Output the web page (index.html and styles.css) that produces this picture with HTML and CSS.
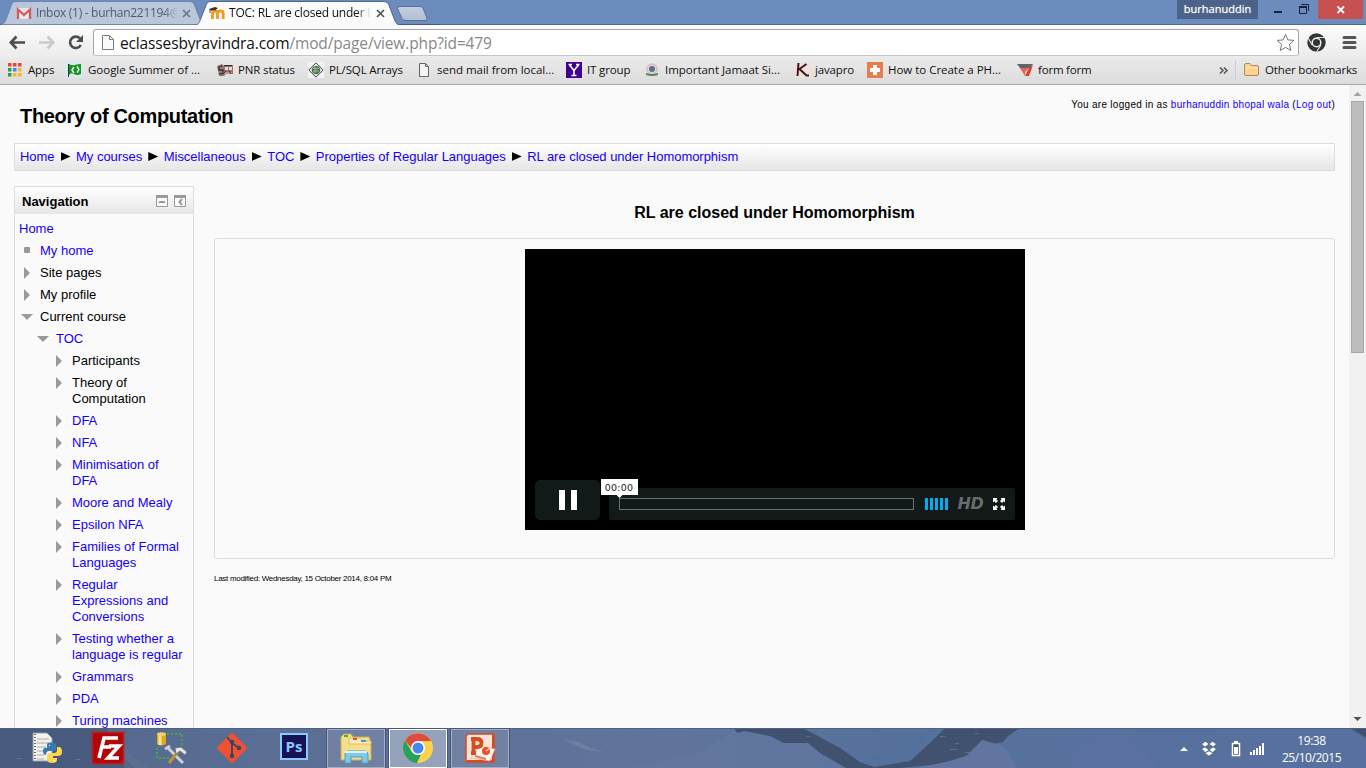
FILE: index.html
```html
<!DOCTYPE html>
<html lang="en">
<head>
<meta charset="utf-8">
<title>TOC: RL are closed under Homomorphism</title>
<link rel="stylesheet" href="styles.css">
</head>
<body>
<div class="screen">
<header class="tabstrip">
  <svg class="tab-shapes" width="440" height="25" viewBox="0 0 440 25">
    <defs><linearGradient id="newtab" x1="0" y1="0" x2="0" y2="1"><stop offset="0" stop-color="#c4cedd"/><stop offset="1" stop-color="#b1bfd5"/></linearGradient></defs>
    <path d="M0 24.500H1366" stroke="#43597f"/>
    <path d="M1 24.500C5 24 6 20 7 17L12 3.500Q13.500 1.500 16 1.500H190Q193 1.500 194 4L201 22Q202 24.500 204 24.500Z" fill="#bac6da" stroke="#7187ab"/>
    <path d="M397.500 8.500Q398 6.500 400 6.500H420Q422 6.500 423 8.500L427 18Q427.500 20.500 425 20.500H406Q403 20.500 402 18.500Z" fill="url(#newtab)" stroke="#586f98"/>
    <path d="M194 25.500C199 25 200 21 201 18L206.500 4Q207.500 1.500 210 1.500H384Q387 1.500 388.500 4L395 21Q396.500 25 401 25.500Z" fill="#fbfbfb" stroke="#536787"/>
  </svg>
  <div class="tab tab-mail">
    <svg class="fav" width="16" height="16" viewBox="0 0 16 16"><rect x="1" y="3" width="14" height="11" fill="#e5e5e7"/><path d="M2 14V4.500L8 10L14 4.500V14" fill="none" stroke="#cf5b5b" stroke-width="2.300"/></svg>
    <span class="tab-title">Inbox (1) - burhan221194@</span>
    <svg class="close" width="9" height="9" viewBox="0 0 9 9"><path d="M1 1L8 8M8 1L1 8" stroke="#667084" stroke-width="1.500"/></svg>
  </div>
  <div class="tab tab-toc">
    <svg class="fav" width="16" height="16" viewBox="0 0 16 16"><path d="M3.500 14V8M3.500 8Q4 6 6 6Q8.300 6 8.500 8V14M8.500 8Q9 6 11.500 6Q14 6 14.200 8V14" fill="none" stroke="#f49a1b" stroke-width="2.800"/><path d="M0 4L6 2L9 3L6 5.500Q4 4.500 2.500 6Z" fill="#333"/><path d="M1 4V8" stroke="#555"/></svg>
    <span class="tab-title">TOC: RL are closed under H</span>
    <svg class="close" width="9" height="9" viewBox="0 0 9 9"><path d="M1 1L8 8M8 1L1 8" stroke="#555" stroke-width="1.700"/></svg>
  </div>
  <div class="window-controls">
    <span class="user">burhanuddin</span>
    <svg width="60" height="19" viewBox="0 0 60 19"><path d="M16 12H24" stroke="#16233a" stroke-width="2"/><path d="M41.500 6.500H48.500V13.500H41.500ZM43.500 4.500H50.500V11" fill="none" stroke="#16233a"/><path d="M41 7H49" stroke="#16233a" stroke-width="2"/></svg>
    <span class="win-close"><svg width="45" height="19" viewBox="0 0 45 19"><path d="M19.500 6.500L26 13M26 6.500L19.500 13" stroke="#fff" stroke-width="1.800"/></svg></span>
  </div>
</header>
<div class="toolbar">
  <svg class="nav-icons" width="93" height="32" viewBox="0 0 93 32">
    <path d="M11 17.500H25M16.500 11.500L10.800 17.500L16.500 23.500" fill="none" stroke="#4d4d4d" stroke-width="2.600"/>
    <path d="M39 17.500H53M47.500 11.500L53.200 17.500L47.500 23.500" fill="none" stroke="#cacaca" stroke-width="2.600"/>
    <path d="M80.800 20A5.700 5.700 0 1 1 80 13.500" fill="none" stroke="#4d4d4d" stroke-width="2.600"/><path d="M83 10V17H76Z" fill="#4d4d4d"/>
  </svg>
  <div class="omnibox">
    <svg class="page-icon" width="12" height="15" viewBox="0 0 12 15"><path d="M1 .5H7.500L11.500 4.500V14.500H.5V.5ZM7.500 .5V4.500H11.500" fill="#fafafa" stroke="#7d7d7d"/></svg>
    <span class="url">eclassesbyravindra.com<span class="path">/mod/page/view.php?id=479</span></span>
    <svg class="star" width="19" height="19" viewBox="0 0 19 19"><path d="M9.500 1.300L11.900 6.900L18 7.400L13.400 11.400L14.800 17.500L9.500 14.300L4.200 17.500L5.600 11.400L1 7.400L7.100 6.900Z" fill="#fff" stroke="#777"/></svg>
  </div>
  <svg class="menu-icons" width="67" height="32" viewBox="0 0 67 32">
    <circle cx="18.500" cy="17.500" r="9.200" fill="#333638"/><path d="M18.500 12.500H27M14.200 20L10 12.800M22.800 20L18.600 27" stroke="#ddd" stroke-width="1.200"/><circle cx="18.500" cy="17.500" r="4.300" fill="#333" stroke="#eee" stroke-width="1.500"/>
    <path d="M46 12.500H57M46 17.500H57M46 22.500H57" stroke="#565656" stroke-width="3" stroke-linecap="round"/>
  </svg>
</div>
<nav class="bookmarks">
  <a class="bm w60"><svg width="16" height="16" viewBox="0 0 16 16"><g fill="#ee4338"><path d="M1 1h3.500v3.500H1zM6 1h3.500v3.500H6zM11 1h3.500v3.500H11z"/></g><path d="M1 6h3.500v3.500H1zM1 11h3.500v3.500H1z" fill="#2b9d4c"/><path d="M6 6h3.500v3.500H6z" fill="#4583ed"/><path d="M11 6h3.500v3.500H11zM11 11h3.500v3.500H11zM6 11h3.500v3.500H6z" fill="#f6b91d"/></svg><span>Apps</span></a>
  <a class="bm w150 gsoc"><svg width="16" height="16" viewBox="0 0 16 16"><rect width="16" height="16" fill="#d8e9f3"/><path d="M2 2Q5 4 8 3T14 2V12Q10 14 7 12T2 13Z" fill="#109618"/><path d="M1.500 2V15" stroke="#234"/><path d="M7 5L5 8L7 11M10 4.500L12 7.500L10 10.500" fill="none" stroke="#fff" stroke-width="1.400"/></svg><span>Google Summer of ...</span></a>
  <a class="bm w91 pnr"><svg width="16" height="16" viewBox="0 0 16 16"><path d="M0 4L5 2L7 4L16 3V12L9 12L7 14H2Z" fill="#9d7168"/><path d="M1 5L5 3L7 9L5 13L2 12Z" fill="#4b403f"/><path d="M8 5H11V8H8ZM12 5H15V8H12Z" fill="#e2ddd8"/><path d="M3 6H6M1 10H5M7 11H15" stroke="#d5c8bd"/><path d="M6 12L9 9M12 9L14 12M7 3.500H15" stroke="#342a2b"/></svg><span>PNR status</span></a>
  <a class="bm w108 pls"><svg width="16" height="16" viewBox="0 0 16 16"><rect width="16" height="16" fill="#f3f3f3"/><path d="M8 .8L15.200 8L8 15.200L.8 8Z" fill="#e9eee9" stroke="#444"/><circle cx="8" cy="8" r="4.300" fill="#487654"/><path d="M5 6.500H11M5 9H11M7 4V11" stroke="#9bb89e"/></svg><span>PL/SQL Arrays</span></a>
  <a class="bm w150 send"><svg width="16" height="16" viewBox="0 0 16 16"><path d="M3.500 1.500H9.500L12.500 4.500V14.500H3.500ZM9.500 1.500V4.500H12.500" fill="#f4f4f4" stroke="#666"/></svg><span>send mail from local...</span></a>
  <a class="bm w78 itg"><svg width="16" height="16" viewBox="0 0 16 16"><rect width="16" height="16" fill="#400090"/><path d="M3.500 3L8 8.500L12.500 3M8 8V14M5.500 13.500H10.500M2.500 2.500H6M10 2.500H13.500" fill="none" stroke="#fff" stroke-width="1.600"/></svg><span>IT group</span></a>
  <a class="bm w150 jam"><svg width="16" height="16" viewBox="0 0 16 16"><circle cx="8" cy="7" r="5" fill="#d9dde0" stroke="#e3b8b5" stroke-width="1.600"/><circle cx="8" cy="7" r="3" fill="#5a738b"/><path d="M2 11L6 12H10L14 11V13Q8 15 2 13Z" fill="#438b6b"/></svg><span>Important Jamaat Si...</span></a>
  <a class="bm w73 jav"><svg width="16" height="16" viewBox="0 0 16 16"><rect width="16" height="16" fill="#efe0df"/><path d="M4.500 1L3.500 14M12.500 2L5.500 7L12.500 13.500H15" fill="none" stroke="#401513" stroke-width="2"/></svg><span>javapro</span></a>
  <a class="bm w150 how"><svg width="16" height="16" viewBox="0 0 16 16"><rect width="16" height="16" fill="#e57d4d"/><path d="M8 3V13M3 8H13" stroke="#fff" stroke-width="4"/></svg><span>How to Create a PH...</span></a>
  <a class="bm form"><svg width="16" height="16" viewBox="0 0 16 16"><path d="M0 2H16L13 6H3Z" fill="#606466"/><path d="M3 6H12L8 10V14Z" fill="#eb6052"/><path d="M12 6L16 3L12 14H8Z" fill="#d83e32"/></svg><span>form form</span></a>
  <svg class="more" width="9" height="9" viewBox="0 0 9 9"><path d="M1 1.500L4 4.500L1 7.500M5 1.500L8 4.500L5 7.500" fill="none" stroke="#555" stroke-width="1.500"/></svg>
  <a class="bm other"><svg width="16" height="16" viewBox="0 0 16 16"><path d="M.5 3Q.5 1.500 2 1.500H6L7.500 3.500H13Q14.500 3.500 14.500 5V12Q14.500 13.500 13 13.500H2Q.5 13.500 .5 12Z" fill="#fcd490" stroke="#b6894d"/><path d="M1 6H14" stroke="#fce9bf"/></svg><span>Other bookmarks</span></a>
</nav>
<div class="viewport">
  <main class="page">
    <div class="page-head">
      <h1>Theory of Computation</h1>
      <p class="login">You are logged in as <a>burhanuddin bhopal wala</a> (<a>Log out</a>)</p>
    </div>
    <div class="crumbs"><a>Home</a><i></i><a>My courses</a><i></i><a>Miscellaneous</a><i></i><a>TOC</a><i></i><a>Properties of Regular Languages</a><i></i><a>RL are closed under Homomorphism</a></div>
    <div class="columns">
      <aside class="block">
        <div class="block-head"><h2>Navigation</h2>
          <svg width="30" height="12" viewBox="0 0 30 12"><path d="M.5 .5H11.500V11.500H.5ZM18.500 .5H29.500V11.500H18.500Z" fill="#fafafa" stroke="#999"/><path d="M0 1.500H12M18 1.500H30" stroke="#999" stroke-width="3"/><path d="M3 7H9" stroke="#999" stroke-width="2"/><path d="M26 4L23.500 7L26 10" fill="none" stroke="#999" stroke-width="2"/></svg>
        </div>
        <ul class="tree">
          <li class="root"><a>Home</a></li>
          <li class="l1 sq"><a>My home</a></li>
          <li class="l1 right">Site pages</li>
          <li class="l1 right">My profile</li>
          <li class="l1 down">Current course</li>
          <li class="l2 down"><a>TOC</a></li>
          <li class="l3 right">Participants</li>
          <li class="l3 right">Theory of<br>Computation</li>
          <li class="l3 right"><a>DFA</a></li>
          <li class="l3 right"><a>NFA</a></li>
          <li class="l3 right"><a>Minimisation of<br>DFA</a></li>
          <li class="l3 right"><a>Moore and Mealy</a></li>
          <li class="l3 right"><a>Epsilon NFA</a></li>
          <li class="l3 right"><a>Families of Formal<br>Languages</a></li>
          <li class="l3 right"><a>Regular<br>Expressions and<br>Conversions</a></li>
          <li class="l3 right"><a>Testing whether a<br>language is regular</a></li>
          <li class="l3 right"><a>Grammars</a></li>
          <li class="l3 right"><a>PDA</a></li>
          <li class="l3 right"><a>Turing machines</a></li>
        </ul>
      </aside>
      <section class="content">
        <h2>RL are closed under Homomorphism</h2>
        <div class="box">
          <div class="video">
            <div class="play"><b></b><b></b></div>
            <div class="controls">
              <div class="progress"><span class="time">00:00</span></div>
              <div class="volume"><b></b><b></b><b></b><b></b><b></b></div>
              <span class="hd">HD</span>
              <svg width="12" height="12" viewBox="0 0 12 12"><path d="M0 0H4.500L3.300 1.300L5 3L3 5L1.300 3.300L0 4.500ZM12 0V4.500L10.700 3.300L9 5L7 3L8.700 1.300L7.500 0ZM0 12V7.500L1.300 8.700L3 7L5 9L3.300 10.700L4.500 12ZM12 12H7.500L8.700 10.700L7 9L9 7L10.700 8.700L12 7.500Z" fill="#fff"/></svg>
            </div>
          </div>
        </div>
        <p class="modified">Last modified: Wednesday, 15 October 2014, 8:04 PM</p>
      </section>
    </div>
  </main>
  <div class="scrollbar">
    <svg width="17" height="16" viewBox="0 0 17 16"><path d="M4.500 11L8.500 7L12.500 11Z" fill="#a3a3a3"/></svg>
    <div class="thumb"></div>
    <svg class="sb-down" width="17" height="17" viewBox="0 0 17 17"><path d="M4.500 6L8.500 10L12.500 6Z" fill="#505050"/></svg>
  </div>
</div>
<footer class="taskbar">
  <svg class="wallpaper" width="1366" height="40" viewBox="0 0 1366 40">
    <defs><linearGradient id="sky" x1="0" x2="1" y1="0" y2="0"><stop offset="0" stop-color="#52658a"/><stop offset=".2" stop-color="#5b6e94"/><stop offset=".5" stop-color="#60749d"/><stop offset=".65" stop-color="#55719b"/><stop offset=".8" stop-color="#56719d"/><stop offset="1" stop-color="#5870a0"/></linearGradient></defs>
    <rect width="1366" height="40" fill="url(#sky)"/>
    <path d="M0 0H107L116 22L135 40H0Z" fill="#485b7e"/>
    <path d="M107 0L125 22L150 40H125Q116 25 107 0Z" fill="#64718e" opacity=".5"/>
    <path d="M734 3L757 2L785 14L808 15L832 30L850 40H626L700 25Z" fill="#687aa2" opacity=".4"/>
    <path d="M734 0H803L840 20L860 34L874 39L910 33L930 15L945 0H1020L1008 8L1003 14L992 16L982 12L966 28L940 36L900 40H846L820 25L808 15L784 15L770 8L744 3L737 5Z" fill="#40526f"/>
    <path d="M918 40L950 33L970 27L982 12L1003 18L1018 40Z" fill="#6275a0"/>
    <path d="M860 34Q890 32 924 15L930 0L900 20Q880 30 860 34Z" fill="#526f9b" opacity=".7"/>
    <path d="M1065 40Q1070 8 1125 3L1160 40Z" fill="#6174a2" opacity=".4"/>
    <path d="M1350 0H1366V10Z" fill="#40526f"/>
    <path d="M562 11L579 14L591 20L605 24L585 22Z" fill="#8390ad" opacity=".4"/>
    <g fill="#8798b4" opacity=".4"><path d="M940 8h5v1h-5zM955 15h4v1h-4zM975 5h4v1h-4zM950 21h7v1h-7zM965 24h5v1h-5zM807 8h4v1h-4zM17 30h5v1h-5zM76 31h4v1h-4zM93 16h5v1h-5z"/></g>
    <path d="M0 .5H1366" stroke="#4d6282"/>
  </svg>
  <div class="launchers">
    <span class="task"><svg width="34" height="34" viewBox="0 0 34 34"><path d="M4 2H18L23 7V30H4Z" fill="#f3f3ed" stroke="#929ba6"/><path d="M8 8H20M8 12H20M8 16H17M8 20H15M8 24H15M8 28H15" stroke="#aaa"/><path d="M6 3V29" stroke="#3d434b" stroke-width="1.500" stroke-dasharray="1 2"/><path d="M18 18V14Q18 11 22 11.500Q27 11 27 14V18Q27 20 24 20H20Q17 20 17 24Q14 24 14 20Q14 16 18 17H23" fill="#367ab3"/><path d="M28 16H30Q33 16 33 21Q33 25 29 25H24V27H28V29Q28 32 23 32Q18 32 18 28V25Q18 22 22 22H25Q28 22 28 19Z" fill="#ffd54d"/><path d="M20 14h1v1h-1zM25 29h1v1h-1z" fill="#fff"/></svg></span>
    <span class="task"><svg width="34" height="34" viewBox="0 0 34 34"><rect x="1.500" y="1.500" width="31" height="31" fill="#b30606" stroke="#c71919" stroke-width="2" stroke-dasharray="2 1"/><path d="M8 27L13 7H27M10 16H20M18 15H28L17 27H28" fill="none" stroke="#fff" stroke-width="3.600"/></svg></span>
    <span class="task"><svg width="34" height="34" viewBox="0 0 34 34"><path d="M14 3H29V14M4 17V27H16" fill="none" stroke="#48a448" stroke-width="2" stroke-dasharray="2 2"/><path d="M4 3V13Q8 16 13 13V3Z" fill="#dda91d"/><path d="M7 3V14" stroke="#ffe68b" stroke-width="3"/><ellipse cx="8.500" cy="3" rx="4.500" ry="1.800" fill="#f1d36f"/><path d="M14 16L30 32M12 18L17 15" stroke="#ccd1d8" stroke-width="3"/><path d="M27 18L16 32" stroke="#c29032" stroke-width="3"/><path d="M22 17L28 16L34 21L32 24L27 20L23 23Z" fill="#e4e7ea" stroke="#6d7886"/></svg></span>
    <span class="task"><svg width="34" height="34" viewBox="0 0 34 34"><rect x="6" y="6" width="22" height="22" rx="1.500" transform="rotate(45 17 17)" fill="#f05133"/><path d="M12 6L17 12V25M17 12L24 17" fill="none" stroke="#39465f" stroke-width="1.800"/><g fill="#39465f"><circle cx="17" cy="11" r="2.300"/><circle cx="17" cy="25" r="2.300"/><circle cx="24" cy="17" r="2.300"/></g></svg></span>
    <span class="task"><span class="ps">Ps</span></span>
  </div>
  <div class="running">
    <span class="app"><svg width="34" height="34" viewBox="0 0 34 34"><path d="M2 6L5 3H12L14 6H30L32 11V29H2Z" fill="#f4df8d" stroke="#c9aa54"/><path d="M10 7H21L23 10H32V13H10Z" fill="#ffebab" stroke="#cbb067" stroke-width=".7"/><path d="M5 4h4v2H5z" fill="#36bb28"/><path d="M14 7h4v2h-4z" fill="#e05035"/><path d="M22 9h5v2h-5z" fill="#4298d8"/><path d="M6 32V23Q6 20 9 20H26Q29 20 29 23V32H23V26H12V32Z" fill="#82c9e7" stroke="#4b9fbe"/><path d="M6 21H28" stroke="#d4f5fb" stroke-width="2"/></svg></span>
    <span class="app active"><svg width="30" height="30" viewBox="0 0 30 30"><circle cx="15" cy="15" r="15" fill="#ffd34d"/><path d="M2 7.500A15 15 0 0 1 28 8H15Q10 9 9 16Z" fill="#dc4d40"/><path d="M2 7.500L9 19Q12 23 18 21.500L14 30A15 15 0 0 1 2 7.500Z" fill="#28a05e"/><circle cx="15" cy="15" r="7" fill="#fff"/><circle cx="15" cy="15" r="5.500" fill="#4688ed"/></svg></span>
    <span class="app"><svg width="32" height="32" viewBox="0 0 32 32"><path d="M4 2H30V30H2V4Z" fill="#fbe3d8" stroke="#d44b24" stroke-width="1.500"/><path d="M29 2V30M3 29H29" stroke="#d44b24" stroke-width="2"/><path d="M15 14L31 17L26 29L7 26L12 20Z" fill="#fff4ef" stroke="#e9a089" stroke-width=".7"/><circle cx="22" cy="19" r="4" fill="#e7512a"/><path d="M22 19L26 16" stroke="#fff"/><path d="M11 24L22 27" stroke="#ed7953" stroke-width="2"/><path d="M7 21H12M9.500 21V7M7 7H13Q17.500 7 17.500 11Q17.500 15 13 15H10" fill="none" stroke="#d44e20" stroke-width="3.800"/></svg></span>
  </div>
  <div class="tray">
    <svg width="86" height="22" viewBox="0 0 86 22"><path d="M3 13L7 9L11 13Z" fill="#fff"/><g fill="#fff" stroke="#314463" stroke-width=".5"><path d="M24.500 6L28.500 3.500L32 6L28 9ZM32 6L35.500 3.500L39.500 6L36 9ZM24.500 11L28 9L32 12L28.500 14.500ZM32 12L36 9L39.500 11L35.500 14.500ZM27.500 15L32 13L36.500 15L32 18Z"/></g><path d="M55.500 5.500H62.500V17.500H55.500Z" fill="#44546f" stroke="#fff" stroke-width="1.500"/><path d="M57 3H61V5H57ZM57 9H61V16H57Z" fill="#fff"/><path d="M73 17V14H75V17ZM76 17V12H78V17ZM79 17V10H81V17ZM82 17V8H84V17ZM85 17V5H87V17Z" fill="#fff"/></svg>
  </div>
  <div class="clock"><span>19:38</span><span>25/10/2015</span></div>
</footer>
</div>
</body>
</html>
```
FILE: styles.css
```css
* { box-sizing: border-box; }
body { margin: 0; overflow: hidden; }
h1, h2, p, ul { margin: 0; padding: 0; }
svg { display: block; flex: none; }
.screen { width: 1366px; height: 768px; display: flex; flex-direction: column; overflow: hidden; background: #fafafa; font-family: "Liberation Sans", Arial, sans-serif; }

.tabstrip { position: relative; flex: none; height: 25px; display: flex; background: #6b8cbd; border-bottom: 1px solid #4f688f; font: 12px/24px "Open Sans", sans-serif; }
.tab-shapes { position: absolute; left: 0; top: 0; }
.tab { position: relative; display: flex; align-items: center; height: 25px; padding-top: 1px; }
.tab-mail { width: 209px; padding-left: 16px; color: #505b6f; }
.tab-toc { width: 195px; color: #111; }
.tab-title { width: 141px; margin-left: 4px; white-space: nowrap; overflow: hidden; letter-spacing: -.3px; -webkit-mask-image: linear-gradient(90deg, #000 128px, transparent 142px); mask-image: linear-gradient(90deg, #000 128px, transparent 142px); }
.tab-toc .tab-title { letter-spacing: -.22px; }
.tab-mail .close { margin-left: 5px; }
.tab-toc .close { margin-left: 6px; }
.window-controls { display: flex; align-items: flex-start; margin-left: auto; padding-right: 3px; }
.user { width: 81px; height: 19px; background: #4b6389; color: #fff; text-align: center; font-size: 11px; line-height: 18px; letter-spacing: 0; text-shadow: 0 0 1px #ccc; }
.win-close { height: 19px; background: #c75050; }

.toolbar { flex: none; height: 32px; display: flex; background: linear-gradient(#fbfbfb, #ececec); }
.omnibox { width: 1206px; height: 27px; margin-top: 4px; margin-right: -1px; display: flex; align-items: center; padding: 0 3px 0 8px; background: #fff; border: 1px solid #a5a5a5; border-bottom-color: #c5c5c5; border-radius: 3px; }
.url { margin-left: 6px; flex: 1; font: 15.500px/24px "Open Sans", sans-serif; letter-spacing: -.14px; color: #111; white-space: nowrap; }
.path { color: #888; }

.bookmarks { flex: none; height: 28px; display: flex; align-items: center; padding: 0 8px 1px 7px; background: linear-gradient(#eaeaea, #dcdcdc); border-bottom: 1px solid #a9a9a9; font: 11.500px/20px "Open Sans", sans-serif; color: #111; }
.bm { display: flex; flex: none; gap: 5px; align-items: center; white-space: nowrap; letter-spacing: -.15px; }
.gsoc, .send, .jam, .how { letter-spacing: -.02px; }
.w60 { width: 60px; } .w73 { width: 73px; } .w78 { width: 78px; } .w91 { width: 91px; } .w108 { width: 108px; } .w150 { width: 150px; }
.form { width: 202px; letter-spacing: -.2px; }
.more { margin-right: 7px; }
.other { border-left: 1px solid #c5d0da; padding-left: 8px; }

.viewport { flex: 1; min-height: 0; display: flex; overflow: hidden; }
.page { flex: 1; min-width: 0; padding: 0 14px; color: #000; font-size: 13px; line-height: 16px; }
.page a { color: #1400f8; }
.page-head { display: flex; justify-content: space-between; height: 58px; padding-left: 6px; }
h1 { margin-top: 19px; font-size: 20px; line-height: 24px; letter-spacing: -.32px; }
.login { margin-top: 12px; font-size: 10px; line-height: 16px; letter-spacing: .29px; }
.crumbs { display: flex; align-items: center; height: 28px; padding: 0 5px 1px; border: 1px solid #ddd; background: linear-gradient(#fff, #e6e6e6); }
.crumbs a { letter-spacing: -.03px; }
.crumbs i { width: 10px; height: 9px; margin: 0 5.500px 0 6px; background: #000; clip-path: polygon(0 0, 100% 50%, 0 100%); }
.columns { display: flex; gap: 20px; margin-top: 15px; }
.block { width: 180px; flex: none; border: 1px solid #ddd; }
.block-head { display: flex; justify-content: space-between; align-items: center; height: 27px; padding: 3px 7px 0; background: linear-gradient(#fff, #e6e6e6); }
.block-head svg { margin-top: -2px; }
.block-head h2 { font-size: 13px; line-height: 16px; }
.tree { list-style: none; padding: 4px 0 0 4px; }
.tree li { position: relative; padding: 3px 0; white-space: nowrap; }
.tree .l1 { padding-left: 21px; }
.tree .l2 { padding-left: 37px; }
.tree .l3 { padding-left: 53px; }
.right::before, .down::before, .sq::before { content: ""; position: absolute; background: #999; }
.right::before { left: 5px; top: 5px; width: 6px; height: 12px; clip-path: polygon(0 0, 100% 50%, 0 100%); }
.l3.right::before { left: 37px; }
.down::before { left: 2px; top: 8px; width: 12px; height: 6px; clip-path: polygon(0 0, 100% 0, 50% 100%); }
.l2.down::before { left: 18px; }
.sq::before { left: 5px; top: 7px; width: 6px; height: 6px; border-radius: 1px; }

.content { flex: 1; }
.content h2 { margin-top: 17px; font-size: 16px; line-height: 20px; text-align: center; }
.box { height: 321px; margin-top: 15px; padding-top: 10px; border: 1px solid #ddd; border-radius: 3px; }
.video { width: 500px; height: 281px; margin: 0 auto; padding: 0 10px 10px; display: flex; align-items: flex-end; gap: 9px; background: #000; }
.play { width: 65px; height: 40px; display: flex; align-items: center; justify-content: center; gap: 6px; padding-left: 1px; background: #121a19; border-radius: 5px; }
.play b { width: 6px; height: 20px; background: #fff; }
.controls { width: 406px; height: 32px; display: flex; align-items: center; padding: 0 10px; background: #121a19; border-radius: 2px; }
.progress { position: relative; width: 295px; height: 12px; border: 1px solid #6b6f6e; }
.time { position: absolute; left: -19px; top: -20px; width: 37px; height: 16px; background: #fff; color: #222; text-align: center; font: 9.500px/17px "DejaVu Sans", sans-serif; letter-spacing: .2px; }
.time::after { content: ""; position: absolute; left: 16px; top: 16px; width: 6px; height: 3px; background: #fff; clip-path: polygon(0 0, 100% 0, 50% 100%); }
.volume { display: flex; gap: 2px; margin-left: 11px; }
.volume b { width: 3px; height: 12px; background: #00adef; }
.hd { width: 26px; margin: 0 9px 0 10px; font: italic bold 16px/16px "DejaVu Sans", sans-serif; color: #696c6c; letter-spacing: -.5px; }
.modified { margin-top: 12px; font-size: 8px; line-height: 16px; letter-spacing: -.29px; }

.scrollbar { width: 17px; flex: none; display: flex; flex-direction: column; background: #f1f1f1; }
.thumb { width: 13px; height: 252px; margin: 0 2px; background: #bcbcbc; border: 1px solid #a8a8a8; }
.sb-down { margin-top: auto; }

.taskbar { position: relative; flex: none; height: 40px; display: flex; }
.wallpaper { position: absolute; left: 0; top: 0; }
.launchers, .running, .tray, .clock { position: relative; display: flex; align-items: center; }
.launchers { padding-left: 15px; }
.task { width: 62px; display: flex; justify-content: center; }
.ps { width: 28px; height: 27px; margin-bottom: 3px; border: 2px solid #8bc8fb; background: #171357; color: #8ac8f9; font: bold 15px/22px "Open Sans", sans-serif; text-align: center; }
.running { gap: 4px; margin-left: 2px; }
.app { width: 58px; height: 39px; display: flex; align-items: center; justify-content: center; border: 1px solid #a3aec2; outline: 1px solid #46577a; background: rgba(170, 180, 200, .25); }
.active { border: 1px solid #fff; background: rgba(205, 211, 223, .5); }
.tray { margin-left: auto; }
.tray svg { overflow: visible; margin: 2px -1px 0 0; }
.clock { flex-direction: column; width: 104px; padding: 4px 7px 0 2px; color: #fff; font: 12px/17px "Open Sans", sans-serif; letter-spacing: -.45px; }
```
